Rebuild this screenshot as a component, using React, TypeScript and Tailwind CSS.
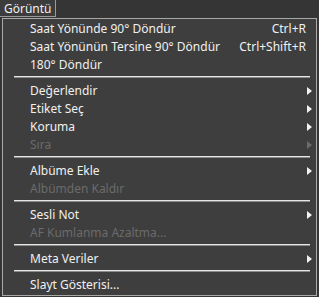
import React from 'react';

type Item =
  | { kind: 'sep' }
  | { kind: 'item'; label: string; shortcut?: string; sub?: boolean; disabled?: boolean };

const items: Item[] = [
  { kind: 'item', label: 'Saat Yönünde 90° Döndür', shortcut: 'Ctrl+R' },
  { kind: 'item', label: 'Saat Yönünün Tersine 90° Döndür', shortcut: 'Ctrl+Shift+R' },
  { kind: 'item', label: '180° Döndür' },
  { kind: 'sep' },
  { kind: 'item', label: 'Değerlendir', sub: true },
  { kind: 'item', label: 'Etiket Seç', sub: true },
  { kind: 'item', label: 'Koruma', sub: true },
  { kind: 'item', label: 'Sıra', sub: true, disabled: true },
  { kind: 'sep' },
  { kind: 'item', label: 'Albüme Ekle', sub: true },
  { kind: 'item', label: 'Albümden Kaldır', disabled: true },
  { kind: 'sep' },
  { kind: 'item', label: 'Sesli Not', sub: true },
  { kind: 'item', label: 'AF Kumlanma Azaltma...', disabled: true },
  { kind: 'sep' },
  { kind: 'item', label: 'Meta Veriler', sub: true },
  { kind: 'sep' },
  { kind: 'item', label: 'Slayt Gösterisi...' },
];

const Arrow = ({ disabled }: { disabled?: boolean }) => (
  <svg width="5" height="8" viewBox="0 0 5 8" className="block">
    <path d="M0 0 L5 4 L0 8 Z" fill={disabled ? '#6b6b6b' : '#f2f2f2'} />
  </svg>
);

export default function App() {
  return (
    <div
      className="w-[319px] h-[297px] bg-[#353535] flex flex-col text-[12px] text-[#f0f0f0]"
      style={{ fontFamily: '"Noto Sans", "DejaVu Sans", sans-serif' }}
    >
      {/* menu bar */}
      <div className="h-[18px] flex">
        <div className="h-[17px] w-[56px] bg-[#3c3c3c] border-r border-b border-[#9a9a9a] flex items-center pl-[4px] pt-[1px] leading-none">
          Görüntü
        </div>
      </div>

      {/* dropdown */}
      <div className="ml-[2px] mr-[2px] h-[278px] bg-[#3e3e3e] border border-[#a8a8a8] flex flex-col">
        {items.map((it, i) =>
          it.kind === 'sep' ? (
            <div key={i} className="h-[8px] flex items-center pl-[11px] pr-[6px]">
              <div className="h-[2px] w-full bg-[#e6e6e6] border-b border-[#8a8a8a]" />
            </div>
          ) : (
            <div
              key={i}
              className={`h-[18px] flex items-center pl-[27px] pr-[4px] pt-[1px] leading-none ${
                it.disabled ? 'text-[#6b6b6b]' : 'text-[#f0f0f0]'
              }`}
            >
              <span className="flex-1 min-w-0 whitespace-nowrap">{it.label}</span>
              {it.shortcut && (
                <span className="shrink-0 mr-[6px] whitespace-nowrap">{it.shortcut}</span>
              )}
              {it.sub && <Arrow disabled={it.disabled} />}
            </div>
          )
        )}
      </div>
    </div>
  );
}
